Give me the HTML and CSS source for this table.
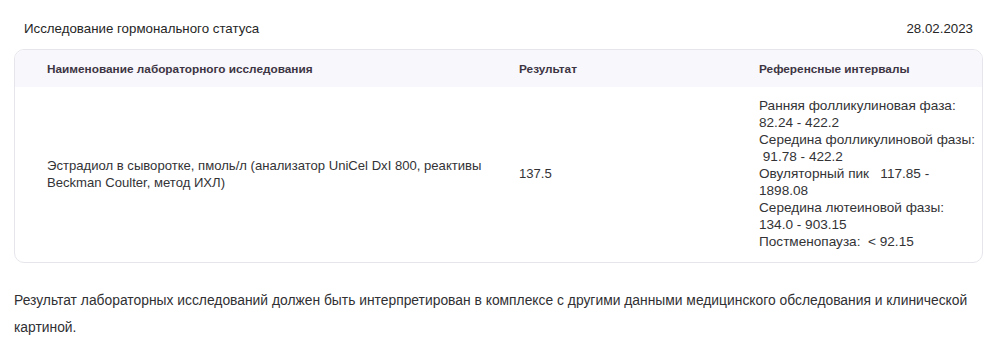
FILE: index.html
```html
<!DOCTYPE html>
<html lang="ru">
<head>
<meta charset="utf-8">
<link rel="stylesheet" href="styles.css">
</head>
<body>
<div class="page">
  <div class="title-row">
    <span class="title">Исследование гормонального статуса</span>
    <span class="date">28.02.2023</span>
  </div>
  <div class="card">
    <div class="row head">
      <div class="cell c1">Наименование лабораторного исследования</div>
      <div class="cell c2">Результат</div>
      <div class="cell c3">Референсные интервалы</div>
    </div>
    <div class="row body">
      <div class="cell c1">Эстрадиол в сыворотке, пмоль/л (анализатор UniCel DxI 800, реактивы Beckman Coulter, метод ИХЛ)</div>
      <div class="cell c2">137.5</div>
      <div class="cell c3 ref">Ранняя фолликулиновая фаза:
82.24 - 422.2
Середина фолликулиновой фазы:
 91.78 - 422.2
Овуляторный пик   117.85 -
1898.08
Середина лютеиновой фазы:
134.0 - 903.15
Постменопауза:  &lt; 92.15</div>
    </div>
  </div>
  <p class="note">Результат лабораторных исследований должен быть интерпретирован в комплексе с другими данными медицинского обследования и клинической картиной.</p>
</div>
</body>
</html>
```

FILE: styles.css
```css
html, body {
  margin: 0;
  padding: 0;
  background: #ffffff;
}
body {
  font-family: "Liberation Sans", Arial, sans-serif;
  color: #2f2f33;
}
.page {
  padding: 0 17px 0 14px;
}
.title-row {
  display: flex;
  justify-content: space-between;
  align-items: center;
  padding: 21px 10px 12px 10px;
  font-size: 13.3px;
  line-height: 16px;
  color: #262626;
}
.card {
  border: 1px solid #e7e5ec;
  border-radius: 10px;
  overflow: hidden;
}
.row {
  display: grid;
  grid-template-columns: 472px 240px 1fr;
}
.cell {
  padding-left: 32px;
}
.head {
  background: #f8f7fb;
  height: 37px;
  align-items: center;
  font-size: 11.8px;
  font-weight: bold;
  color: #3d3544;
}
.body {
  padding: 10px 0 12px;
  align-items: center;
  font-size: 13.1px;
  line-height: 17px;
  color: #333336;
}
.ref {
  white-space: pre-wrap;
  font-size: 13.6px;
}
.note {
  margin: 24px 0 0;
  font-size: 13.85px;
  line-height: 27px;
  color: #303033;
}
```
